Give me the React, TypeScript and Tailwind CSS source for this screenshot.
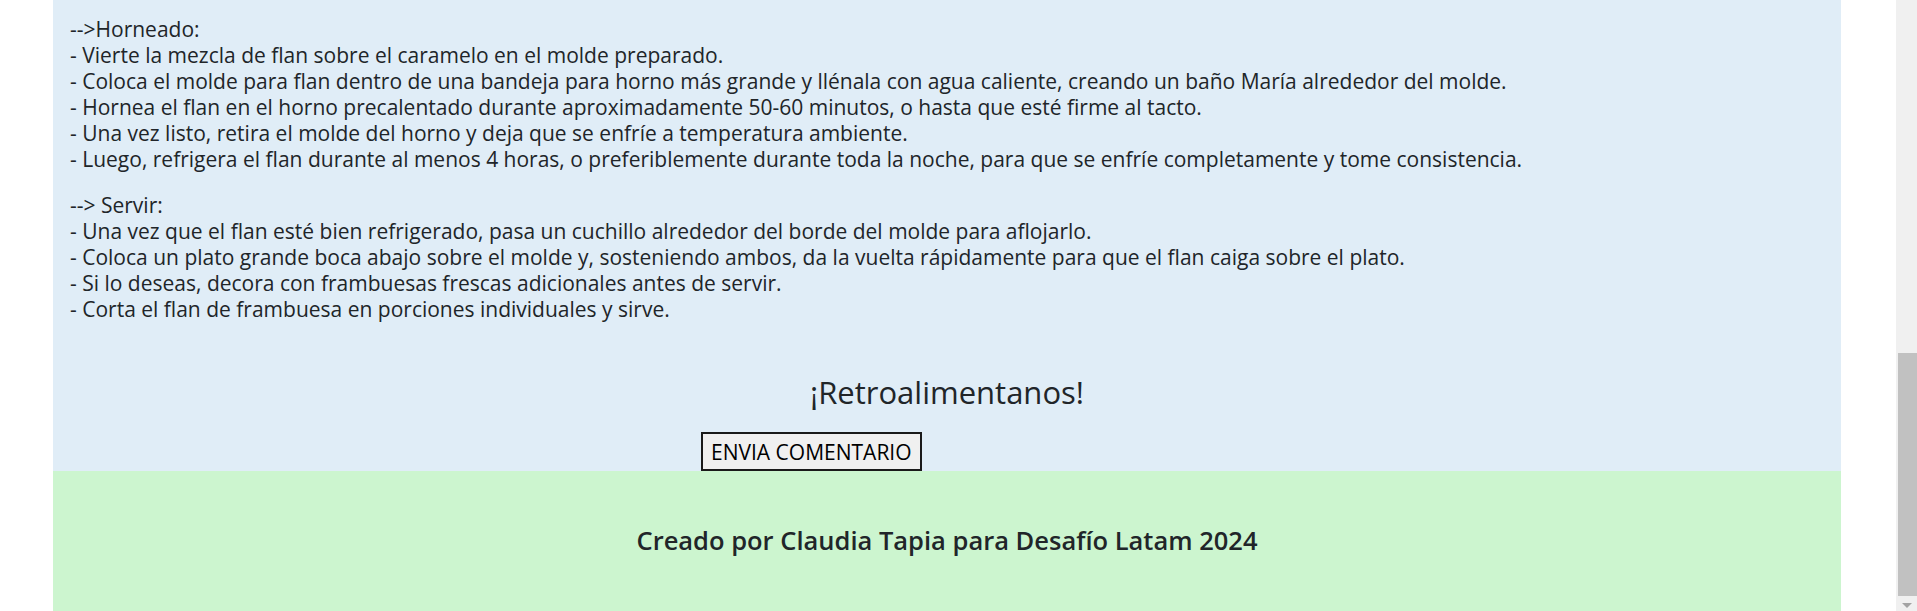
import React from 'react';

const horneado = [
    '-->Horneado:',
    '- Vierte la mezcla de flan sobre el caramelo en el molde preparado.',
    '- Coloca el molde para flan dentro de una bandeja para horno más grande y llénala con agua caliente, creando un baño María alrededor del molde.',
    '- Hornea el flan en el horno precalentado durante aproximadamente 50-60 minutos, o hasta que esté firme al tacto.',
    '- Una vez listo, retira el molde del horno y deja que se enfríe a temperatura ambiente.',
    '- Luego, refrigera el flan durante al menos 4 horas, o preferiblemente durante toda la noche, para que se enfríe completamente y tome consistencia.',
];

const servir = [
    '--> Servir:',
    '- Una vez que el flan esté bien refrigerado, pasa un cuchillo alrededor del borde del molde para aflojarlo.',
    '- Coloca un plato grande boca abajo sobre el molde y, sosteniendo ambos, da la vuelta rápidamente para que el flan caiga sobre el plato.',
    '- Si lo deseas, decora con frambuesas frescas adicionales antes de servir.',
    '- Corta el flan de frambuesa en porciones individuales y sirve.',
];

export default function App() {
    return (
        <div className="flex h-[611px] w-full overflow-hidden bg-white font-['Open_Sans',sans-serif] text-[#212529]">
            <div className="flex-1">
                <div className="ml-[53px] w-[1788px]">
                    <section className="bg-[#e0edf7] px-[17px] pt-[16px]">
                        <div className="text-[21px] leading-[26px]">
                            {horneado.map((line) => (
                                <div key={line}>{line}</div>
                            ))}
                        </div>
                        <div className="mt-[20px] text-[21px] leading-[26px]">
                            {servir.map((line) => (
                                <div key={line}>{line}</div>
                            ))}
                        </div>
                        <h2 className="mt-[53px] text-center text-[31px] leading-[34px]">¡Retroalimentanos!</h2>
                        <div className="mt-[23px] flex">
                            <button className="ml-[631px] h-[39px] border-2 border-[#1a1a1a] bg-[#f0f0f0] px-[8px] text-[21px] leading-[26px] text-black">
                                ENVIA COMENTARIO
                            </button>
                        </div>
                    </section>
                    <footer className="h-[200px] bg-[#ccf5cf] pt-[53px] text-center text-[25.5px] leading-[32px] font-semibold">
                        Creado por Claudia Tapia para Desafío Latam 2024
                    </footer>
                </div>
            </div>
            <div className="relative w-[21px] bg-[#f0f0f0]">
                <div className="absolute top-[353px] left-[2px] h-[243px] w-[19px] bg-[#c1c1c1]" />
                <div className="absolute top-[603px] left-[6px] h-0 w-0 border-x-[5px] border-t-[5px] border-x-transparent border-t-[#a3a3a3]" />
            </div>
        </div>
    );
}
